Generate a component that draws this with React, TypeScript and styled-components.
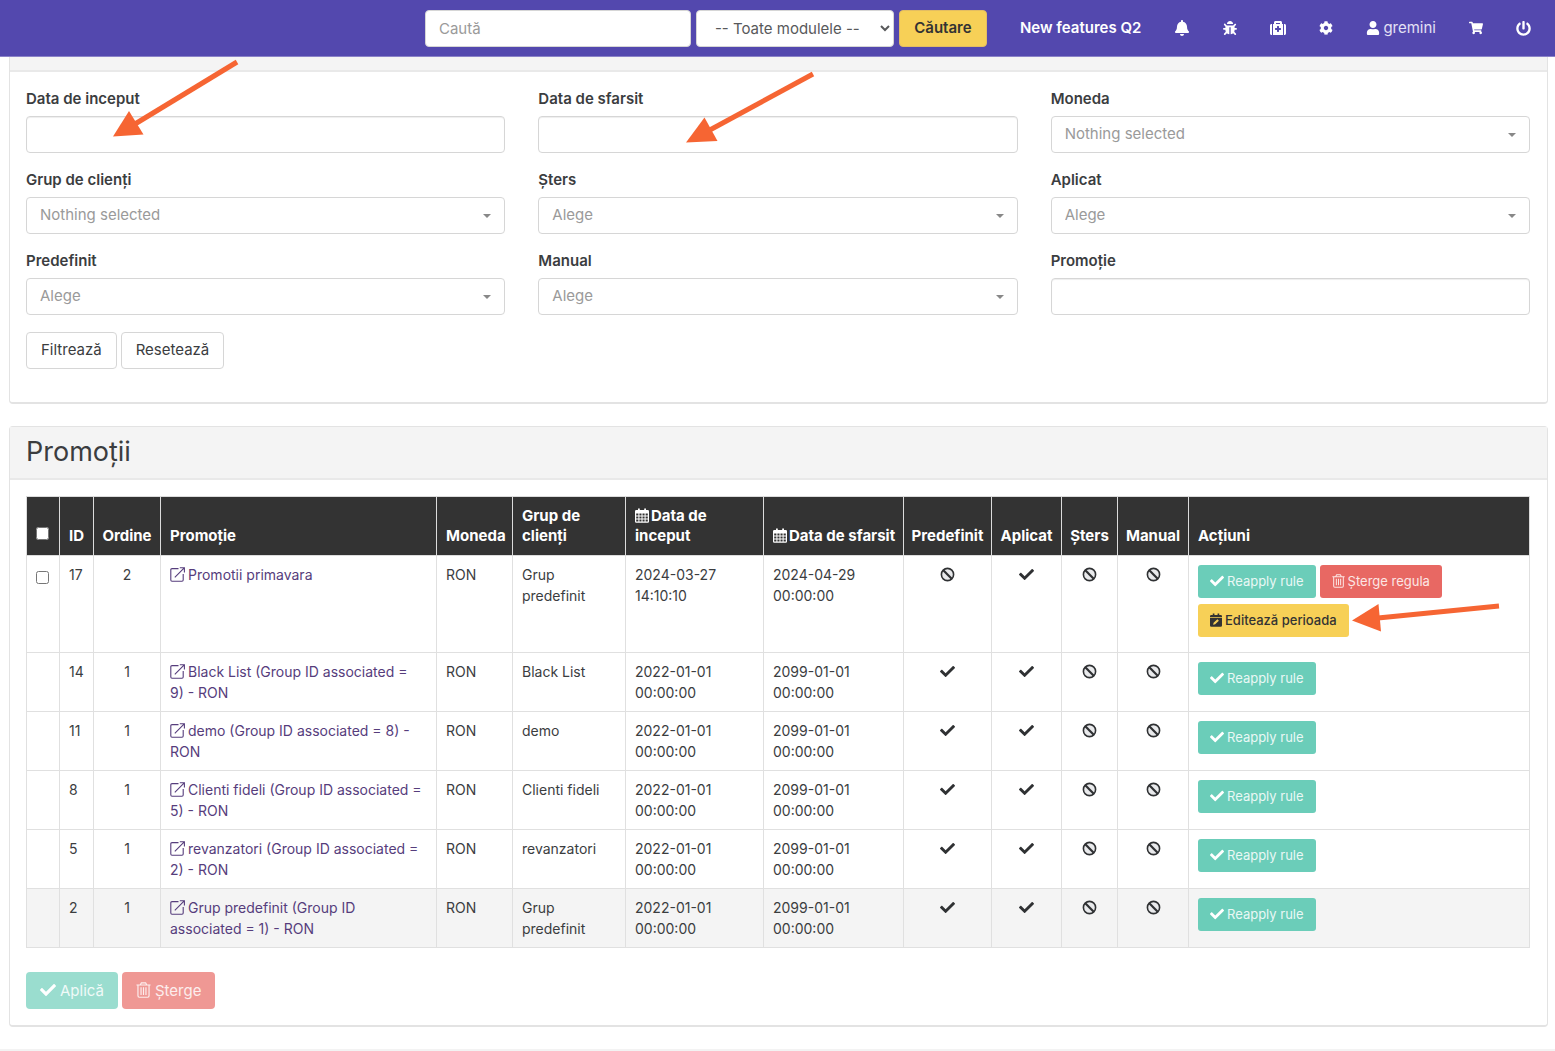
import React from "react";
import styled, { createGlobalStyle, css } from "styled-components";
import {
  FaBell,
  FaBug,
  FaCheck,
  FaCog,
  FaMedkit,
  FaPowerOff,
  FaShoppingCart,
  FaUser,
} from "react-icons/fa";

const GlobalStyle = createGlobalStyle`
  *, *::before, *::after { box-sizing: border-box; }
  body {
    margin: 0;
    background: #fff;
    color: #3b3d3f;
    font-family: Inter, "Noto Sans", sans-serif;
    font-size: 15px;
    line-height: 22px;
  }
  input, select, button { font: inherit; margin: 0; }
`;

const Page = styled.div`
  position: relative;
`;

/* ---------- top bar ---------- */

const TopBar = styled.header`
  display: flex;
  align-items: center;
  justify-content: flex-end;
  gap: 33px;
  height: 57px;
  padding: 0 24px;
  background: #5348ae;
  border-bottom: 1px solid #8a82c8;
`;

const SearchForm = styled.form`
  display: flex;
  gap: 5px;
`;

const field = css`
  height: 37px;
  border: 1px solid #d6d6d6;
  border-radius: 4px;
  background: #fff;
`;

const SearchInput = styled.input`
  ${field}
  width: 266px;
  padding: 0 13px;
  color: #555;
  &::placeholder { color: #9a9a9a; opacity: 1; }
`;

const ModuleSelect = styled.select`
  ${field}
  width: 198px;
  padding: 0 14px;
  color: #58595b;
`;

const SearchButton = styled.button`
  height: 37px;
  width: 88px;
  padding: 0;
  border: 1px solid #e3bd62;
  border-radius: 4px;
  background: #f7d057;
  color: #333;
  font-weight: 600;
`;

const TopNav = styled.nav`
  display: flex;
  align-items: center;
  gap: 33px;
`;

const NavLink = styled.a<{ $strong?: boolean }>`
  display: inline-flex;
  align-items: center;
  gap: 3px;
  color: ${(p) => (p.$strong ? "#fff" : "#e4e1f5")};
  font-weight: ${(p) => (p.$strong ? 600 : 400)};
  text-decoration: none;
  white-space: nowrap;
  svg { color: #fff; }
`;

/* ---------- cards ---------- */

const Main = styled.main`
  display: flex;
  flex-direction: column;
  gap: 22px;
  padding: 0 7px 22px 9px;
`;

const Card = styled.section<{ $open?: boolean }>`
  border: 1px solid #e3e3e3;
  border-bottom-width: 2px;
  border-radius: ${(p) => (p.$open ? "0 0 4px 4px" : "4px")};
  ${(p) => p.$open && "border-top: 0;"}
`;

const CardHeader = styled.div<{ $empty?: boolean }>`
  padding: ${(p) => (p.$empty ? "13px 0 0" : "8px 16px 10px")};
  background: #f4f4f4;
  border-bottom: 2px solid #e9e9e9;
`;

const CardTitle = styled.h2`
  margin: 0;
  font-size: 27px;
  font-weight: 400;
  line-height: 33px;
`;

const CardBody = styled.div<{ $roomy?: boolean }>`
  padding: 16px 17px ${(p) => (p.$roomy ? 33 : 16)}px 16px;
`;

const Filters = styled.form`
  display: flex;
  flex-direction: column;
  gap: 17px;
`;

const FilterGrid = styled.div`
  display: grid;
  grid-template-columns: repeat(3, minmax(0, 1fr));
  gap: 16px 33px;
`;

const Field = styled.div`
  display: flex;
  flex-direction: column;
  gap: 6px;
`;

const FieldLabel = styled.label`
  font-weight: 600;
`;

const TextInput = styled.input`
  ${field}
  width: 100%;
  padding: 0 13px;
  box-shadow: inset 0 1px 1px #eee;
`;

const SelectWrap = styled.div`
  position: relative;
  display: flex;
`;

const PickSelect = styled.select`
  ${field}
  width: 100%;
  padding: 0 32px 1px 13px;
  appearance: none;
  color: #9a9a9a;
`;

const Caret = styled.span`
  position: absolute;
  top: 17px;
  right: 14px;
  border: 4px solid transparent;
  border-top-color: #888;
  border-bottom: 0;
  pointer-events: none;
`;

const ButtonRow = styled.div`
  display: flex;
  gap: 4px;
`;

const PlainButton = styled.button`
  ${field}
  padding: 0 14px 1px;
  color: #3b3d3f;
`;

/* ---------- table ---------- */

const Table = styled.table`
  width: 100%;
  margin-bottom: 24px;
  table-layout: fixed;
  border-collapse: collapse;
  font-size: 14px;
  line-height: 21px;
`;

const HeadCell = styled.th<{ $center?: boolean }>`
  padding: 9px 7px 9px ${(p) => (p.$center ? 7 : 9)}px;
  border: 1px solid #dcdcdc;
  background: #333;
  color: #fff;
  font-size: 15px;
  font-weight: 700;
  line-height: 20px;
  text-align: ${(p) => (p.$center ? "center" : "left")};
  vertical-align: bottom;
  svg { vertical-align: -2px; margin-right: 2px; }
`;

const Row = styled.tr<{ $shaded?: boolean }>`
  background: ${(p) => (p.$shaded ? "#f4f4f4" : "#fff")};
`;

const Cell = styled.td<{ $center?: boolean }>`
  padding: 8px 9px;
  border: 1px solid #e0e0e0;
  text-align: ${(p) => (p.$center ? "center" : "left")};
  vertical-align: top;
`;

const ActionCell = styled(Cell)`
  padding: 9px 9px 7px;
`;

const Tick = styled.input`
  display: block;
  width: 13px;
  height: 13px;
`;

const BodyTick = styled(Tick)`
  margin-top: 7px;
`;

const HeadTick = styled(Tick)`
  margin-bottom: 6px;
`;

const RowLink = styled.a`
  color: #563d7c;
  text-decoration: none;
  svg { vertical-align: -2px; margin-right: 3px; }
`;

const FlagIcon = styled.span`
  display: inline-block;
  color: #2f3133;
  svg { vertical-align: -2px; }
`;

const Actions = styled.div`
  display: flex;
  flex-wrap: wrap;
  gap: 6px 4px;
  max-width: 300px;
  padding-bottom: 8px;
`;

const tones = {
  green: css`background: #6bcdb9; color: #e9f8f5; svg { color: #fff; }`,
  red: css`background: #e86863; color: #fce6e5;`,
  yellow: css`background: #f7d057; color: #333; font-weight: 500;`,
};

const ActionButton = styled.button<{ $tone: keyof typeof tones; $large?: boolean }>`
  display: inline-flex;
  align-items: center;
  gap: ${(p) => (p.$large ? 4 : 3)}px;
  height: ${(p) => (p.$large ? 37 : 33)}px;
  padding: 0 ${(p) => (p.$large ? 14 : 12)}px;
  border: 0;
  border-radius: ${(p) => (p.$large ? 4 : 3)}px;
  font-size: ${(p) => (p.$large ? 15 : 13)}px;
  ${(p) => tones[p.$tone]}
  svg { margin-bottom: 1px; }
  &:disabled { opacity: 0.68; }
`;

const Footer = styled.footer`
  border-top: 2px solid #f3f3f3;
`;

/* ---------- drawings ---------- */

const ExternalIcon = () => (
  <svg width="15" height="15" viewBox="0 0 15 15" fill="none" stroke="currentColor" strokeWidth="1.1">
    <path d="M8.5 1.6H2Q.8 1.6.8 2.8V13Q.8 14.2 2 14.2H12Q13.2 14.2 13.2 13V7" />
    <path d="M4.8 10.4 14 1.2M9.8.8H14.4V5.4" />
  </svg>
);

const CalendarIcon = () => (
  <svg width="14" height="15" viewBox="0 0 14 15" fill="currentColor">
    <path
      fillRule="evenodd"
      d="M1.2 2H3V.4H4.8V2H9.2V.4H11V2H12.8Q14 2 14 3.2V13.6Q14 14.8 12.800 14.8H1.200Q0 14.8 0 13.600V3.200Q0 2 1.200 2ZM1.200 5.600V7.600H3.400V5.600ZM4.400 5.600V7.600H6.500V5.600ZM7.500 5.600V7.600H9.600V5.600ZM10.600 5.600V7.600H12.800V5.600ZM1.200 8.600V10.600H3.400V8.600ZM4.400 8.600V10.600H6.500V8.600ZM7.500 8.600V10.600H9.600V8.600ZM10.600 8.600V10.600H12.800V8.600ZM1.200 11.600V13.600H3.400V11.600ZM4.400 11.600V13.600H6.500V11.600ZM7.500 11.600V13.600H9.600V11.600ZM10.600 11.600V13.600H12.800V11.600Z"
    />
  </svg>
);

const TrashIcon = ({ size = 14 }: { size?: number }) => (
  <svg width={size - 1} height={size} viewBox="0 0 14 15" fill="none" stroke="currentColor" strokeWidth="1.1">
    <path d="M.4 2.8H13.6M4 2.6 5 .8H9L10 2.6M1.8 3V13Q1.8 14.3 3 14.3H11Q12.2 14.3 12.2 13V3M4.7 5V12.2M7 5V12.2M9.3 5V12.2" />
  </svg>
);

const BanIcon = () => (
  <svg width="15" height="15" viewBox="0 0 15 15" fill="#e9eaec" stroke="currentColor">
    <circle cx="7.5" cy="7.5" r="6.1" strokeWidth="1.6" />
    <path d="M3.3 3.3 11.7 11.7" strokeWidth="2.2" />
  </svg>
);

const EditCalendarIcon = () => (
  <svg width="12" height="14" viewBox="0 0 13 15" fill="currentColor">
    <path d="M1.4 2H3V.4H4.8V2H8.2V.4H10V2H11.6Q13 2 13 3.4V4.5H0V3.4Q0 2 1.4 2Z" />
    <path
      fillRule="evenodd"
      d="M0 5.4H13V13.4Q13 14.8 11.6 14.8H1.4Q0 14.8 0 13.4ZM3.4 12.6 5.6 12.1 9.6 8.3 8 6.8 3.9 10.6Z"
    />
  </svg>
);

const ArrowBox = styled.svg`
  position: absolute;
  top: 0;
  left: 0;
  pointer-events: none;
`;

const arrows = [
  { line: "M237 62 135 124", head: "113,136.500 129,111 143.500,134.500" },
  { line: "M813 74 708 131", head: "686,142.500 704.500,117.500 717.500,141" },
  { line: "M1499 606 1378 618", head: "1352,620.500 1378.500,604 1381,631.500" },
];

const Arrows = () => (
  <ArrowBox width="1510" height="650" aria-hidden="true">
    {arrows.map((a) => (
      <g key={a.line} fill="#f66533" stroke="none">
        <path d={a.line} stroke="#f66533" strokeWidth="5" />
        <polygon points={a.head} />
      </g>
    ))}
  </ArrowBox>
);

/* ---------- data ---------- */

const filters: { id: string; label: string; option?: string }[] = [
  { id: "start", label: "Data de inceput" },
  { id: "end", label: "Data de sfarsit" },
  { id: "currency", label: "Moneda", option: "Nothing selected" },
  { id: "group", label: "Grup de clienți", option: "Nothing selected" },
  { id: "deleted", label: "Șters", option: "Alege" },
  { id: "applied", label: "Aplicat", option: "Alege" },
  { id: "default", label: "Predefinit", option: "Alege" },
  { id: "manual", label: "Manual", option: "Alege" },
  { id: "promotion", label: "Promoție" },
];

const columnWidths = [33, 34, 67, 276, 76, 113, 138, 140, 88, 70, 56, 71];

const rows = [
  { id: 17, order: 2, name: "Promotii primavara", group: "Grup predefinit", start: "2024-03-27 14:10:10", end: "2024-04-29 00:00:00", isDefault: false, editable: true },
  { id: 14, order: 1, name: "Black List (Group ID associated = 9)\u00a0- RON", group: "Black List", start: "2022-01-01 00:00:00", end: "2099-01-01 00:00:00", isDefault: true },
  { id: 11, order: 1, name: "demo (Group ID associated = 8) - RON", group: "demo", start: "2022-01-01 00:00:00", end: "2099-01-01 00:00:00", isDefault: true },
  { id: 8, order: 1, name: "Clienti fideli (Group ID associated = 5) - RON", group: "Clienti fideli", start: "2022-01-01 00:00:00", end: "2099-01-01 00:00:00", isDefault: true },
  { id: 5, order: 1, name: "revanzatori (Group ID associated = 2) - RON", group: "revanzatori", start: "2022-01-01 00:00:00", end: "2099-01-01 00:00:00", isDefault: true },
  { id: 2, order: 1, name: "Grup predefinit (Group ID associated = 1) - RON", group: "Grup predefinit", start: "2022-01-01 00:00:00", end: "2099-01-01 00:00:00", isDefault: true, shaded: true },
];

const Flag = ({ on }: { on: boolean }) => (
  <Cell $center>
    <FlagIcon role="img" aria-label={on ? "Da" : "Nu"}>
      {on ? <FaCheck size={15} /> : <BanIcon />}
    </FlagIcon>
  </Cell>
);

export default function App() {
  return (
    <Page>
      <GlobalStyle />
      <TopBar>
        <SearchForm>
          <SearchInput type="search" placeholder="Caută" aria-label="Caută" />
          <ModuleSelect aria-label="Modul">
            <option>-- Toate modulele --</option>
          </ModuleSelect>
          <SearchButton type="button">Căutare</SearchButton>
        </SearchForm>
        <TopNav>
          <NavLink href="#features" $strong>New features Q2</NavLink>
          <NavLink href="#alerts" aria-label="Notificări"><FaBell size={16} /></NavLink>
          <NavLink href="#bugs" aria-label="Erori"><FaBug size={14} /></NavLink>
          <NavLink href="#help" aria-label="Ajutor"><FaMedkit size={16} /></NavLink>
          <NavLink href="#settings" aria-label="Setări"><FaCog size={14} /></NavLink>
          <NavLink href="#account"><FaUser size={14} /> gremini</NavLink>
          <NavLink href="#cart" aria-label="Coș"><FaShoppingCart size={14} /></NavLink>
          <NavLink href="#logout" aria-label="Ieșire"><FaPowerOff size={15} /></NavLink>
        </TopNav>
      </TopBar>

      <Main>
        <Card $open>
          <CardHeader $empty />
          <CardBody $roomy>
            <Filters>
              <FilterGrid>
                {filters.map((f) => (
                  <Field key={f.id}>
                    <FieldLabel htmlFor={f.id}>{f.label}</FieldLabel>
                    {f.option ? (
                      <SelectWrap>
                        <PickSelect id={f.id}>
                          <option>{f.option}</option>
                        </PickSelect>
                        <Caret />
                      </SelectWrap>
                    ) : (
                      <TextInput id={f.id} type="text" />
                    )}
                  </Field>
                ))}
              </FilterGrid>
              <ButtonRow>
                <PlainButton type="button">Filtrează</PlainButton>
                <PlainButton type="button">Resetează</PlainButton>
              </ButtonRow>
            </Filters>
          </CardBody>
        </Card>

        <Card>
          <CardHeader>
            <CardTitle>Promoții</CardTitle>
          </CardHeader>
          <CardBody>
            <Table>
              <colgroup>
                {columnWidths.map((w, i) => (
                  <col key={i} width={w} />
                ))}
                <col />
              </colgroup>
              <thead>
                <tr>
                  <HeadCell><HeadTick type="checkbox" aria-label="Selectează tot" /></HeadCell>
                  <HeadCell>ID</HeadCell>
                  <HeadCell $center>Ordine</HeadCell>
                  <HeadCell>Promoție</HeadCell>
                  <HeadCell>Moneda</HeadCell>
                  <HeadCell>Grup de clienți</HeadCell>
                  <HeadCell><CalendarIcon />Data de inceput</HeadCell>
                  <HeadCell><CalendarIcon />Data de sfarsit</HeadCell>
                  <HeadCell $center>Predefinit</HeadCell>
                  <HeadCell $center>Aplicat</HeadCell>
                  <HeadCell $center>Șters</HeadCell>
                  <HeadCell $center>Manual</HeadCell>
                  <HeadCell>Acțiuni</HeadCell>
                </tr>
              </thead>
              <tbody>
                {rows.map((r) => (
                  <Row key={r.id} $shaded={r.shaded}>
                    <Cell>{r.editable && <BodyTick type="checkbox" aria-label={r.name} />}</Cell>
                    <Cell>{r.id}</Cell>
                    <Cell $center>{r.order}</Cell>
                    <Cell>
                      <RowLink href={`#promotion-${r.id}`}><ExternalIcon />{r.name}</RowLink>
                    </Cell>
                    <Cell>RON</Cell>
                    <Cell>{r.group}</Cell>
                    <Cell>{r.start}</Cell>
                    <Cell>{r.end}</Cell>
                    <Flag on={r.isDefault} />
                    <Flag on />
                    <Flag on={false} />
                    <Flag on={false} />
                    <ActionCell>
                      <Actions>
                        <ActionButton type="button" $tone="green"><FaCheck size={14} />Reapply rule</ActionButton>
                        {r.editable && (
                          <>
                            <ActionButton type="button" $tone="red"><TrashIcon />Șterge regula</ActionButton>
                            <ActionButton type="button" $tone="yellow"><EditCalendarIcon />Editează perioada</ActionButton>
                          </>
                        )}
                      </Actions>
                    </ActionCell>
                  </Row>
                ))}
              </tbody>
            </Table>
            <ButtonRow>
              <ActionButton type="button" $tone="green" $large disabled><FaCheck size={16} />Aplică</ActionButton>
              <ActionButton type="button" $tone="red" $large disabled><TrashIcon size={16} />Șterge</ActionButton>
            </ButtonRow>
          </CardBody>
        </Card>
      </Main>
      <Footer />
      <Arrows />
    </Page>
  );
}
